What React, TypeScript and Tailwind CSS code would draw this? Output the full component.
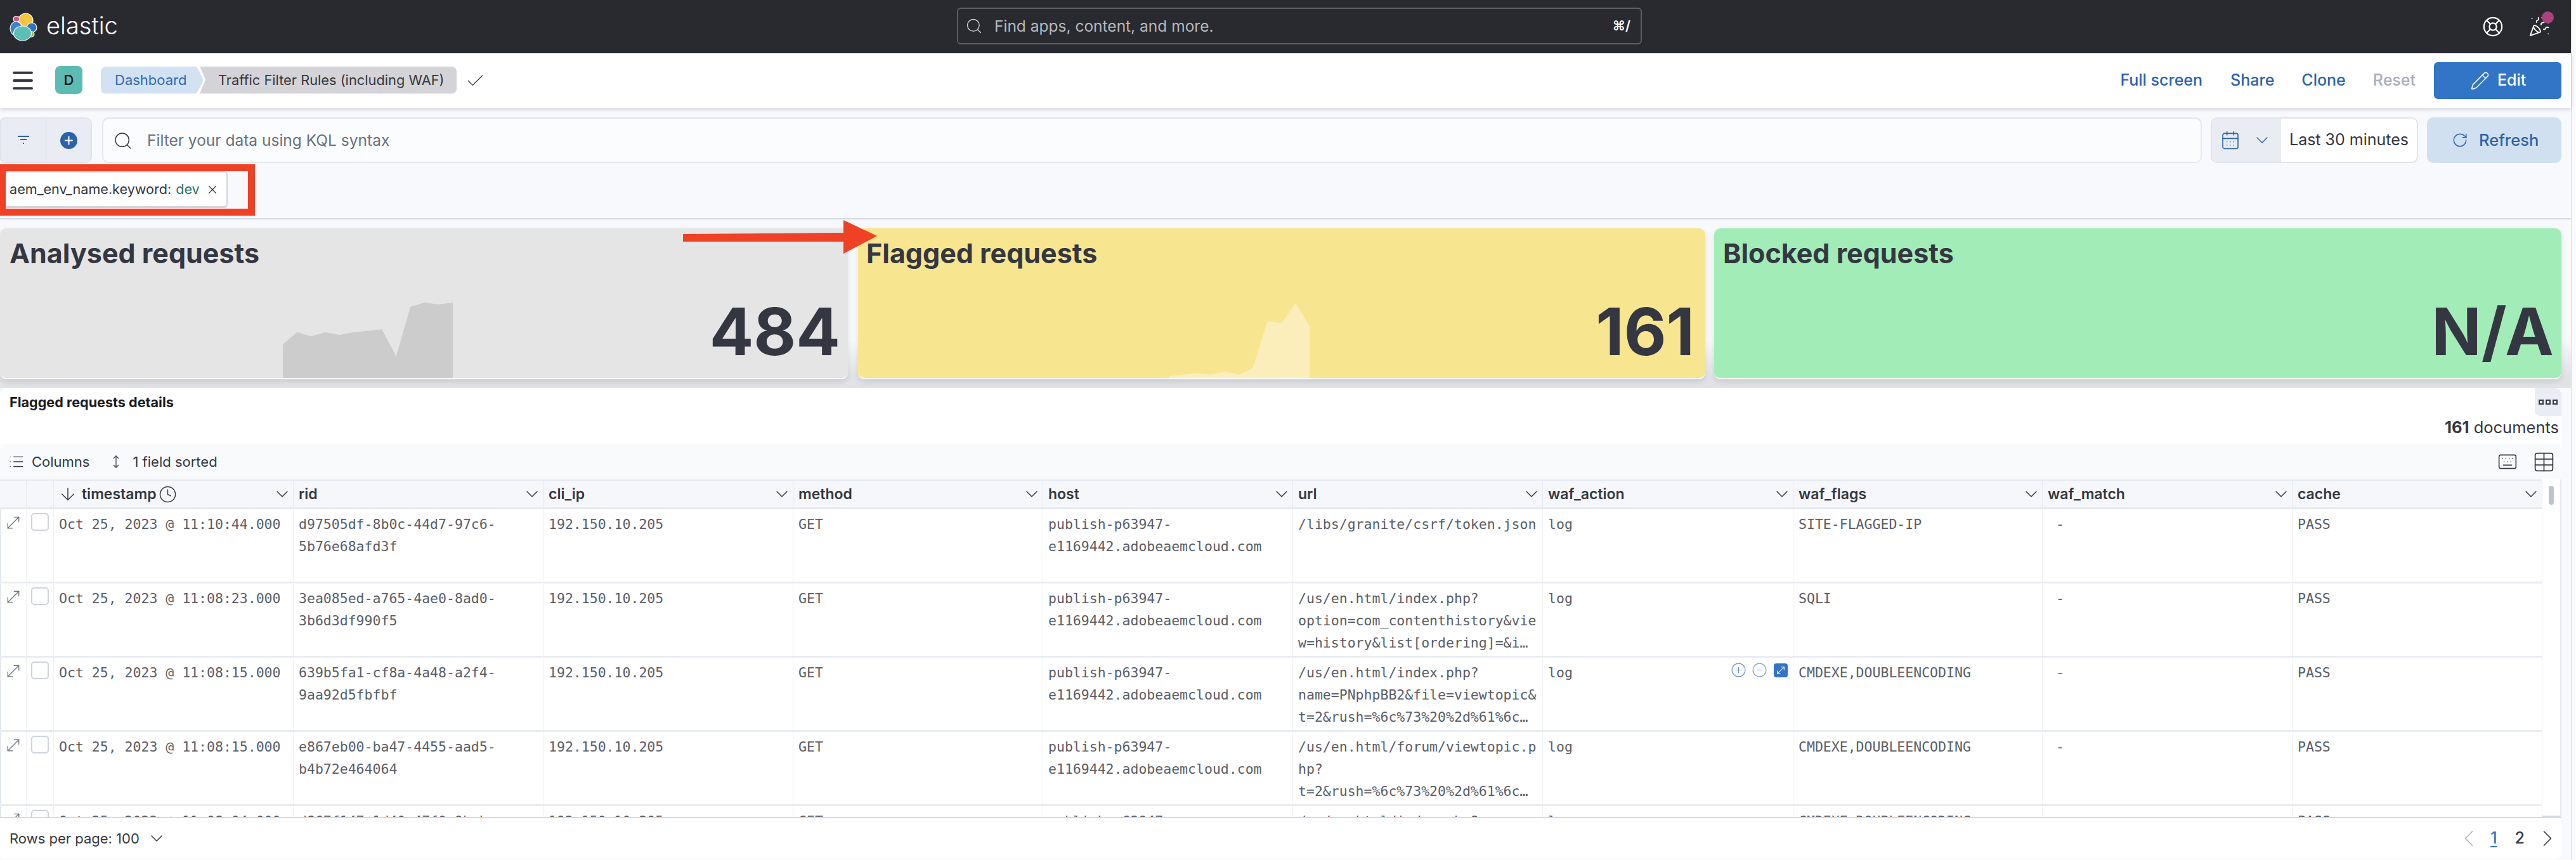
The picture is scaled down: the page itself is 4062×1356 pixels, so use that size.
import React from "react";
import {
  ArrowDown, CalendarDays, Check, ChevronDown, ChevronLeft, ChevronRight, CircleMinus, CirclePlus, Clock,
  Keyboard, LifeBuoy, List, Menu, MoveDiagonal, MoveVertical, PartyPopper, Pencil, RotateCw, Search, Table, X,
} from "lucide-react";

const W = ["w-[394px]", "w-[394px]", "w-[394px]", "w-[394px]", "w-[394px]", "w-[395px]", "w-[393px]", "w-[394px]", "w-[394px]"];
const HEAD = ["rid", "cli_ip", "method", "host", "url", "waf_action", "waf_flags", "waf_match", "cache"];

const HOST = ["publish-p63947-", "e1169442.adobeaemcloud.com"];
const ROWS = [
  { ts: "Oct 25, 2023 @ 11:10:44.000", rid: ["d97505df-8b0c-44d7-97c6-", "5b76e68afd3f"], url: ["/libs/granite/csrf/token.json"], flags: "SITE-FLAGGED-IP" },
  { ts: "Oct 25, 2023 @ 11:08:23.000", rid: ["3ea085ed-a765-4ae0-8ad0-", "3b6d3df990f5"], url: ["/us/en.html/index.php?", "option=com_contenthistory&vie", "w=history&list[ordering]=&i…"], flags: "SQLI" },
  { ts: "Oct 25, 2023 @ 11:08:15.000", rid: ["639b5fa1-cf8a-4a48-a2f4-", "9aa92d5fbfbf"], url: ["/us/en.html/index.php?", "name=PNphpBB2&file=viewtopic&", "t=2&rush=%6c%73%20%2d%61%6c…"], flags: "CMDEXE,DOUBLEENCODING", hover: true },
  { ts: "Oct 25, 2023 @ 11:08:15.000", rid: ["e867eb00-ba47-4455-aad5-", "b4b72e464064"], url: ["/us/en.html/forum/viewtopic.p", "hp?", "t=2&rush=%6c%73%20%2d%61%6c…"], flags: "CMDEXE,DOUBLEENCODING" },
  { ts: "Oct 25, 2023 @ 11:08:04.000", rid: ["d867f147-1d40-47f0-9beb-", "1c2a90e4b7d1"], url: ["/us/en.html/index.php?", "name=PNphpBB2&file=viewtopic&", "t=2&rush=%6c%73%20%2d%61%6c…"], flags: "CMDEXE,DOUBLEENCODING" },
];

function Lines({ lines }: { lines: string[] }) {
  return (
    <>
      {lines.map((l) => (
        <div key={l} className="whitespace-pre">{l}</div>
      ))}
    </>
  );
}

function Cell({ w, children }: { w: string; children: React.ReactNode }) {
  return <div className={`${w} shrink-0 pl-2 pt-[6px] border-r border-[#eef0f4] overflow-hidden`}>{children}</div>;
}

function Row({ r }: { r: (typeof ROWS)[number] }) {
  return (
    <div className="flex h-[117px] shrink-0 w-[4009px] border-b-[3px] border-[#e9edf3] font-['DejaVu_Sans_Mono',monospace] text-[21.5px] leading-[35px] text-[#5a5e68]">
      <div className="w-[42px] shrink-0 border-r border-[#eef0f4] flex justify-center pt-[6px]">
        <MoveDiagonal size={30} strokeWidth={1} className="text-[#69707d]" />
      </div>
      <div className="w-[43px] shrink-0 border-r border-[#eef0f4] flex justify-center pt-[6px]">
        <div className="w-[28px] h-[28px] rounded-[5px] border-2 border-[#cfd3da] bg-white" />
      </div>
      <Cell w="w-[378px]"><Lines lines={[r.ts]} /></Cell>
      <Cell w={W[0]}><Lines lines={r.rid} /></Cell>
      <Cell w={W[1]}><Lines lines={["192.150.10.205"]} /></Cell>
      <Cell w={W[2]}><Lines lines={["GET"]} /></Cell>
      <Cell w={W[3]}><Lines lines={HOST} /></Cell>
      <Cell w={W[4]}><Lines lines={r.url} /></Cell>
      <Cell w={W[5]}>
        <div className="flex justify-between pr-2">
          <span>log</span>
          {r.hover && (
            <span className="flex items-start gap-[8px] pt-[1px] text-[#3274c6]">
              <CirclePlus size={25} strokeWidth={1.1} className="text-[#5f8fd0]" />
              <CircleMinus size={25} strokeWidth={1.1} className="text-[#7f9dc6]" />
              <span className="ml-[2px] mt-[2px] w-[22px] h-[22px] rounded-[4px] bg-[#3274c6] flex items-center justify-center">
                <MoveDiagonal size={18} strokeWidth={1.4} className="text-white" />
              </span>
            </span>
          )}
        </div>
      </Cell>
      <Cell w={W[6]}><Lines lines={[r.flags]} /></Cell>
      <Cell w={W[7]}><Lines lines={[" -"]} /></Cell>
      <Cell w={W[8]}><Lines lines={["PASS"]} /></Cell>
    </div>
  );
}

function Spark({ points, view, className, fill }: { points: string; view: string; className: string; fill: string }) {
  return (
    <svg viewBox={view} preserveAspectRatio="none" className={className}>
      <polygon points={points} fill={fill} />
    </svg>
  );
}

function StatCard({ title, value, className, pl, pr, children }: { title: string; value: string; className: string; pl: string; pr: string; children?: React.ReactNode }) {
  return (
    <div className={`relative shrink-0 h-[238px] rounded-[10px] shadow-[0_4px_10px_rgba(0,0,0,0.1)] border-b-2 border-white flex flex-col justify-between overflow-hidden ${pl} ${pr} pt-[15px] pb-[22px] ${className}`}>
      {children}
      <div className="relative text-[43px] leading-[48px] font-bold text-[#343741]">{title}</div>
      <div className="relative self-end text-[103px] leading-[103px] font-bold text-[#343741]">{value}</div>
    </div>
  );
}

function ElasticLogo() {
  return (
    <svg width="44" height="45" viewBox="-1 -1 44 45" className="shrink-0">
      <g stroke="#ffffff" strokeWidth="1.2">
        <ellipse cx="24.5" cy="11.5" rx="11.5" ry="11.5" fill="#f5c542" />
        <ellipse cx="10" cy="9" rx="5" ry="4.5" fill="#d4568f" />
        <ellipse cx="9.5" cy="24" rx="9.5" ry="11" fill="#3b82d0" />
        <ellipse cx="34" cy="22.5" rx="8" ry="7.5" fill="#2f74c4" />
        <ellipse cx="32" cy="33" rx="6" ry="4.5" fill="#93c03e" />
        <ellipse cx="19.5" cy="31.5" rx="14" ry="11.5" fill="#5cbfb5" />
      </g>
    </svg>
  );
}

export default function App() {
  return (
    <div className="w-[4062px] h-[1356px] overflow-hidden flex bg-white font-['Inter',sans-serif] text-[#343741]">
      <div className="relative w-[4054px] shrink-0 flex flex-col bg-[#f8f9fc]">
        {/* top bar */}
        <div className="h-[84px] shrink-0 bg-[#282a30] flex items-center relative pl-[15px]">
          <ElasticLogo />
          <span className="ml-[14px] text-[38px] leading-none font-light text-white pb-[4px]">elastic</span>
          <div className="absolute left-[1509px] top-[12px] w-[1080px] h-[58px] rounded-[6px] border-2 border-[#5c5e64] flex items-center pl-[11px] pr-[16px]">
            <Search size={28} strokeWidth={1.1} className="text-[#d4d6da]" />
            <span className="ml-[18px] text-[24.5px] text-[#b6b8bd]">Find apps, content, and more.</span>
            <span className="ml-auto text-[21px] font-semibold text-white">⌘/</span>
          </div>
          <div className="ml-auto flex items-center gap-[39px] pr-[33px]">
            <LifeBuoy size={34} strokeWidth={1.5} className="text-white" />
            <span className="relative">
              <PartyPopper size={34} strokeWidth={1.3} className="text-white" />
              <span className="absolute -right-[6px] -top-[7px] w-[19px] h-[19px] rounded-full bg-[#a8437c]" />
            </span>
          </div>
        </div>

        {/* header */}
        <div className="relative z-10 h-[86px] shrink-0 bg-white shadow-[0_2px_6px_rgba(60,60,100,0.22)] flex items-center pl-[15px] pr-[15px]">
          <Menu size={42} strokeWidth={2.2} className="text-[#343741]" />
          <div className="ml-[30px] w-[43px] h-[44px] rounded-[8px] bg-[#5cbcb3] flex items-center justify-center text-[22px] font-medium text-black mb-[2px]">D</div>
          <div className="ml-[29px] flex items-center h-[43px] mb-[2px]">
            <div className="h-full w-[162px] bg-[#d3e2f3] rounded-l-[8px] pl-[22px] flex items-center text-[22px] text-[#3068b5] [clip-path:polygon(0_0,151px_0,162px_50%,151px_100%,0_100%)]">Dashboard</div>
            <div className="-ml-[6px] h-full w-[405px] bg-[#d4d4d8] rounded-r-[8px] pl-[29px] flex items-center text-[21.8px] text-[#343741] whitespace-nowrap [clip-path:polygon(0_0,100%_0,100%_100%,0_100%,9px_50%)]">Traffic Filter Rules (including WAF)</div>
          </div>
          <Check size={33} strokeWidth={1} className="ml-[13px] text-[#343741]" />
          <div className="ml-auto flex items-center text-[25px] font-medium text-[#2b62ab]">
            <span>Full screen</span>
            <span className="ml-[44px]">Share</span>
            <span className="ml-[43px]">Clone</span>
            <span className="ml-[43px] text-[#a9afbb]">Reset</span>
            <div className="ml-[29px] w-[201px] h-[58px] rounded-[6px] bg-[#3274c6] text-white flex items-center pl-[57px] gap-[12px]">
              <Pencil size={31} strokeWidth={1.2} />
              <span>Edit</span>
            </div>
          </div>
        </div>

        {/* query bar */}
        <div className="mt-[15px] h-[72px] shrink-0 flex items-stretch pr-[15px]">
          <div className="w-[145px] shrink-0 flex rounded-r-[10px] rounded-l-[8px] bg-[#e9edf3] border-2 border-[#dfe3ec]">
            <div className="w-[71px] border-r border-[#d3dae6] flex items-center justify-center">
              <svg width="20" height="14" viewBox="0 0 20 14" className="text-[#2b62ab]">
                <path d="M1 1h18M5 6h10M9 12h2" stroke="currentColor" strokeWidth="2" fill="none" />
              </svg>
            </div>
            <div className="flex-1 flex items-center justify-center">
              <span className="w-[27px] h-[27px] rounded-full bg-[#2b62ab] flex items-center justify-center text-white">
                <svg width="15" height="15" viewBox="0 0 15 15"><path d="M7.5 1v13M1 7.5h13" stroke="currentColor" strokeWidth="2" /></svg>
              </span>
            </div>
          </div>
          <div className="ml-[16px] flex-1 rounded-[10px] bg-[#fbfcfd] border-2 border-[#e4e8f0] border-t-[3px] flex items-center pl-[15px]">
            <Search size={32} strokeWidth={1.1} className="text-[#343741]" />
            <span className="ml-[22px] text-[24.5px] text-[#69707d]">Filter your data using KQL syntax</span>
          </div>
          <div className="ml-[14px] w-[327px] shrink-0 rounded-[10px] border-2 border-[#dfe3ec] flex overflow-hidden bg-white">
            <div className="w-[109px] shrink-0 bg-[#e9edf3] flex items-center pl-[13px]">
              <CalendarDays size={32} strokeWidth={1.2} className="text-[#2b62ab]" />
              <ChevronDown size={32} strokeWidth={1.1} className="ml-[18px] text-[#2b62ab]" />
            </div>
            <span className="ml-[13px] self-center text-[25px] whitespace-nowrap text-[#343741]">Last 30 minutes</span>
          </div>
          <div className="ml-[14px] w-[212px] shrink-0 rounded-[10px] bg-[#d0e0f1] flex items-center pl-[39px] gap-[17px] text-[25.5px] font-medium text-[#2b62ab]">
            <RotateCw size={26} strokeWidth={1.4} />
            <span>Refresh</span>
          </div>
        </div>

        {/* filter row */}
        <div className="h-[89px] shrink-0 border-b-2 border-[#d3dae6] flex">
          <div className="mt-[2px] w-[402px] h-[81px] border-[11px] border-l-[9px] border-[#ee4125] flex items-start">
            <div className="h-[58px] w-[350px] bg-white rounded-r-[6px] border-2 border-[#d3d5da] border-b-[3px] border-l-0 flex items-center pl-[6px] text-[21.6px] whitespace-nowrap">
              <span>aem_env_name.keyword:</span>
              <span className="ml-[7px] text-[#2a6f65]">dev</span>
              <X size={22} strokeWidth={1.3} className="ml-[9px]" />
            </div>
          </div>
        </div>

        {/* cards */}
        <div className="h-[266px] shrink-0 pt-[14px] flex bg-[linear-gradient(to_bottom,#f8f9fc_0,#f8f9fc_190px,#e0e2e6_248px)]">
          <StatCard title="Analysed requests" value="484" pl="pl-[15px]" pr="pr-[12px]" className="w-[1337px] bg-[#e5e5e5]">
            <Spark
              view="514 413 309 357"
              className="absolute left-[446px] bottom-0 w-[268px] h-[119px]"
              fill="#cccccc"
              points="514,610 540,553 566,573 591,553 617,566 643,553 668,547 694,540 720,667 746,433 772,413 797,422 823,413 823,770 514,770"
            />
          </StatCard>
          <StatCard title="Flagged requests" value="161" pl="pl-[13px]" pr="pr-[17px]" className="ml-[16px] w-[1336px] bg-[#f7e68f]">
            <Spark
              view="580 416 256 354"
              className="absolute left-[490px] bottom-0 w-[222px] h-[118px]"
              fill="#fbeebb"
              points="580,762 631,747 657,754 682,739 708,754 733,723 759,504 785,510 811,416 836,527 836,770 580,770"
            />
          </StatCard>
          <StatCard title="Blocked requests" value="N/A" pl="pl-[14px]" pr="pr-[12px]" className="ml-[14px] w-[1336px] bg-[#a2ecb8]" />
        </div>

        {/* panel */}
        <div className="relative h-[742px] w-[4039px] shrink-0 bg-white rounded-[10px] flex flex-col overflow-hidden">
          <div className="absolute right-0 top-0 w-[42px] h-[44px] rounded-bl-[8px] bg-[#e9edf3] flex items-center justify-center gap-[3px]">
            <span className="w-[8px] h-[8px] border-2 border-[#343741]" />
            <span className="w-[8px] h-[8px] border-2 border-[#343741]" />
            <span className="w-[8px] h-[8px] border-2 border-[#343741]" />
          </div>
          <div className="h-[88px] shrink-0 flex justify-between pl-[15px] pr-[4px]">
            <span className="mt-[9px] text-[21.6px] leading-[26px] font-bold text-[#1a1c21]">Flagged requests details</span>
            <span className="mt-[47px] text-[25.5px] leading-[30px]"><b className="font-bold">161</b> documents</span>
          </div>
          <div className="h-[56px] shrink-0 bg-[#f9fafc] flex items-center pl-[13px] pr-[9px] text-[22px] rounded-t-[8px]">
            <List size={26} strokeWidth={1.2} />
            <span className="ml-[11px]">Columns</span>
            <MoveVertical size={22} strokeWidth={1.3} className="ml-[31px]" />
            <span className="ml-[15px]">1 field sorted</span>
            <Keyboard size={32} strokeWidth={1.2} className="ml-auto" />
            <Table size={37} strokeWidth={1.1} className="ml-[23px]" />
          </div>
          <div className="flex flex-1 min-h-0 border-l-2 border-r-2 border-[#e4e8f0]">
            <div className="w-[4009px] shrink-0 flex flex-col overflow-hidden -ml-[2px]">
              <div className="h-[47px] shrink-0 flex bg-[#f5f7fa] border-t-[2px] border-b-[3px] border-[#e4e8f0] text-[23px] font-semibold text-[#343741]">
                <div className="w-[42px] shrink-0 border-r border-[#e4e8f0]" />
                <div className="w-[43px] shrink-0 border-r border-[#e4e8f0]" />
                <div className="w-[378px] shrink-0 border-r border-[#e4e8f0] flex items-center pl-[6px] pr-[1px]">
                  <ArrowDown size={32} strokeWidth={1.1} />
                  <span className="ml-[6px]">timestamp</span>
                  <Clock size={29} strokeWidth={1.2} className="ml-[3px]" />
                  <ChevronDown size={32} strokeWidth={1.1} className="ml-auto" />
                </div>
                {HEAD.map((h, i) => (
                  <div key={h} className={`${W[i]} shrink-0 border-r border-[#e4e8f0] flex items-center pl-2 pr-[1px]`}>
                    <span>{h}</span>
                    <ChevronDown size={32} strokeWidth={1.1} className="ml-auto" />
                  </div>
                ))}
              </div>
              <div className="flex-1 min-h-0 overflow-hidden">
                {ROWS.map((r) => (
                  <Row key={r.ts + r.rid[0]} r={r} />
                ))}
              </div>
            </div>
            <div className="flex-1 flex justify-center pt-[10px] bg-white border-b-2 border-[#d3dae6]">
              <span className="w-[8px] h-[30px] rounded-full bg-[#bfc4cc]" />
            </div>
          </div>
          <div className="h-[66px] shrink-0 border-t-2 border-[#d3dae6] flex items-center pl-[15px] text-[22px] text-[#343741]">
            <span>Rows per page: 100</span>
            <ChevronDown size={32} strokeWidth={1.1} className="ml-[11px]" />
            <ChevronLeft size={44} strokeWidth={0.9} className="ml-auto text-[#a9afbb]" />
            <span className="ml-[12px] text-[25px] font-medium text-[#3274c6] underline underline-offset-4">1</span>
            <span className="ml-[28px] text-[25px] font-medium">2</span>
            <ChevronRight size={44} strokeWidth={0.9} className="ml-[14px]" />
          </div>
        </div>

        {/* annotation arrow */}
        <svg className="absolute left-[1070px] top-[340px]" width="320" height="70" viewBox="1070 340 320 70">
          <polygon points="1077,369 1330,367 1330,347 1383,372 1330,400 1330,381 1077,381" fill="#ee4125" />
        </svg>
      </div>
      <div className="flex-1 border-l border-[#d3dae6] bg-[#fafbfc]" />
    </div>
  );
}
